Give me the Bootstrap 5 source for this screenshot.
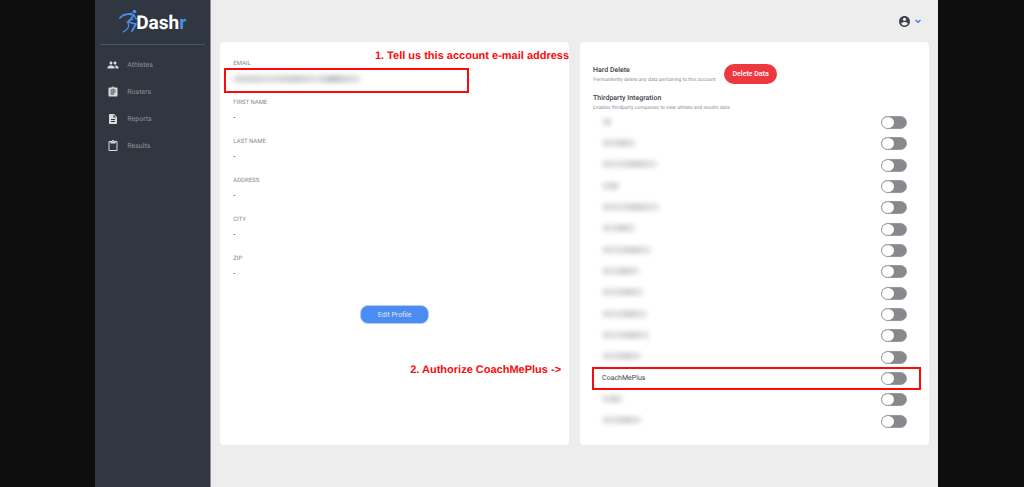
<!DOCTYPE html>
<html lang="en">
<head>
<meta charset="utf-8">
<meta name="viewport" content="width=device-width, initial-scale=1">
<title>Dashr – Profile</title>
<link href="https://cdn.jsdelivr.net/npm/bootstrap@5.3.0/dist/css/bootstrap.min.css" rel="stylesheet">
<style>
  body { background: #0e0e0e; font-family: Roboto, "Liberation Sans", sans-serif; font-size: 7px; line-height: 10px; color: #3c434c; text-rendering: geometricPrecision; }
  .app-shell { display: grid; grid-template-columns: 116px minmax(0, 1fr); margin-left: 9.3%; margin-right: 8.4%; background: #ededed; }
  .side { background: #303740; border-right: 1px solid #8d9095; }
  .brand { height: 45px; margin: 0 5px; padding: 9px 0 0 19px; border-bottom: 1px solid #4b5862; color: #fff; font-size: 19px; line-height: 28px; font-weight: 700; }
  .brand:hover { color: #fff; }
  .brand svg { width: 22px; height: 26px; margin-right: -5px; }
  .brand em { font-style: normal; color: #4a8df0; }
  .menu { padding: 6px 0 0 12px; }
  .menu a { height: 27px; gap: 8px; color: #8c9197; }
  .menu svg { width: 12px; height: 12px; fill: #d8dadb; }
  .topbar { height: 42px; padding-right: 16px; }
  .account { border: 0; background: none; }
  .panels { display: grid; grid-template-columns: repeat(2, minmax(0, 1fr)); padding: 0 9px 42px; gap: 11px; }
  .panel { border: 0; border-radius: 4px; background: #fff; position: relative; min-height: 403px; }
  .panel-profile { padding: 17px 4px 0; }
  .field { height: 39px; padding: 0; margin: 0; }
  .field dt { padding-left: 9px; font-size: 6px; line-height: 9px; font-weight: 400; color: #858a91; }
  .field dd { height: 25px; width: 245px; max-width: 100%; margin: 0; padding: 3px 7px; border: 2px solid transparent; font-size: 8px; line-height: 12px; }
  .field dd.marked { border-color: #fb0a0c; padding-top: 5px; }
  .edit-btn { width: 69px; height: 19px; padding: 0; border: 1px solid #b3cdf3; border-radius: 8px; background: #4a8cf2; color: #e6e7e8; font-size: 7px; line-height: 10px; }
  .panel-data { padding: 22px 9px 13px 13px; }
  .block-title { margin: 0; font-size: 7px; line-height: 11px; font-weight: 500; }
  .second-title { margin-top: 9px; }
  .hint { margin: 0; font-size: 5px; line-height: 8px; color: #8d9096; }
  .hard-delete { width: 131px; flex: none; }
  .delete-btn { width: 53px; height: 20px; padding: 0; border: 0; border-radius: 10px; background: #ee3840; color: #fff; font-size: 7px; font-weight: 500; }
  .partner { flex: 1 1 0; padding: 0 13px 0 9px; }
  .partner label { padding-bottom: 2px; }
  .partner.marked { outline: 2px solid #fb0a0c; outline-offset: -1px; }
  .partner .form-check-input { width: 26px; height: 13px; margin: 0; border: 1px solid #999a9d; border-radius: 7px; background: #88898c; display: flex; align-items: center; }
  .partner .form-check-input::before { content: ""; width: 12px; height: 11px; border-radius: 50%; background: #fff; }
  .partner .form-check-input:checked { background: #4a8cf2; justify-content: flex-end; }
  .smudge { display: block; height: 8px; border-radius: 4px; filter: blur(2px); background: linear-gradient(90deg, #dcdcdf, #e6e3e4 30%, #d2d4d7 62%, #eeebec); }
  .smudge-mail { width: 128px; background: linear-gradient(90deg, #dededf, #d4d6d9 15%, #e1e0e1 28%, #cdd0d3 50%, #e6e4e5 65%, #c3c8cc 78%, #ece9ea); }
  .callout-note { position: absolute; z-index: 2; white-space: nowrap; color: #fb0a0c; font: 700 11px/14px "Liberation Sans", Arial, sans-serif; margin: 0; }
  .note-mail { top: 7px; right: 0; }
  .note-auth { top: 321px; right: 8px; }
</style>
<script src="https://cdn.jsdelivr.net/npm/bootstrap@5.3.0/dist/js/bootstrap.bundle.min.js"></script>
</head>
<body>
<div class="app-shell min-vh-100">
  <aside class="side">
    <a class="brand d-flex align-items-start text-decoration-none" href="#" aria-label="Dashr">
      <svg viewBox="0 0 22 26" fill="none" stroke="#4a8df0" stroke-linecap="round" stroke-linejoin="round" aria-hidden="true">
        <circle cx="15.500" cy="2.500" r="1.800" fill="#4a8df0" stroke="none"/>
        <path d="M1 9C4 5 8 4 15 6L9 13L17 15L13 22" stroke-width="1.800"/>
        <path d="M15 6L17 10L21 8M9 14C11 18 8 21 4 23M8 13L14 10M6 6L13 4" stroke-width="1.300"/>
      </svg>
      <span>Dash<em>r</em></span>
    </a>
    <nav class="menu nav flex-column">
      <a class="d-flex align-items-center text-decoration-none" href="#"><svg viewBox="0 0 24 24"><path d="M16 11c1.660 0 2.990-1.340 2.990-3S17.660 5 16 5c-1.660 0-3 1.340-3 3s1.340 3 3 3zm-8 0c1.660 0 2.990-1.340 2.990-3S9.660 5 8 5C6.340 5 5 6.340 5 8s1.340 3 3 3zm0 2c-2.330 0-7 1.170-7 3.500V19h14v-2.500c0-2.330-4.670-3.500-7-3.500zm8 0c-.29 0-.62.02-.97.05 1.160.84 1.970 1.970 1.970 3.450V19h6v-2.500c0-2.330-4.670-3.500-7-3.500z"/></svg>Athletes</a>
      <a class="d-flex align-items-center text-decoration-none" href="#"><svg viewBox="0 0 24 24"><path d="M19 3h-4.180C14.400 1.840 13.300 1 12 1c-1.300 0-2.400.84-2.820 2H5c-1.100 0-2 .9-2 2v14c0 1.100.9 2 2 2h14c1.100 0 2-.9 2-2V5c0-1.100-.9-2-2-2zm-7 0c.55 0 1 .45 1 1s-.45 1-1 1-1-.45-1-1 .45-1 1-1zm2 14H7v-2h7v2zm3-4H7v-2h10v2zm0-4H7V7h10v2z"/></svg>Rosters</a>
      <a class="d-flex align-items-center text-decoration-none" href="#"><svg viewBox="0 0 24 24"><path d="M14 2H6c-1.100 0-2 .9-2 2v16c0 1.100.9 2 2 2h12c1.100 0 2-.9 2-2V8l-6-6zm2 16H8v-2h8v2zm0-4H8v-2h8v2zm-3-5V3.500L18.500 9H13z"/></svg>Reports</a>
      <a class="d-flex align-items-center text-decoration-none" href="#"><svg viewBox="0 0 24 24"><path d="M19 2h-4.180C14.400.84 13.300 0 12 0c-1.300 0-2.400.84-2.820 2H5c-1.100 0-2 .9-2 2v16c0 1.100.9 2 2 2h14c1.100 0 2-.9 2-2V4c0-1.100-.9-2-2-2zm-7 0c.55 0 1 .45 1 1s-.45 1-1 1-1-.45-1-1 .45-1 1-1zm7 18H5V4h2v3h10V4h2v16z"/></svg>Results</a>
    </nav>
  </aside>

  <main>
    <header class="topbar d-flex justify-content-end align-items-center">
      <button class="account d-flex align-items-center p-0" type="button" aria-label="Account">
        <svg width="11" height="11" viewBox="2 2 20 20" fill="#3b434d"><path d="M12 2C6.480 2 2 6.480 2 12s4.480 10 10 10 10-4.480 10-10S17.520 2 12 2zm0 3c1.660 0 3 1.340 3 3s-1.340 3-3 3-3-1.340-3-3 1.340-3 3-3zm0 14.200c-2.500 0-4.710-1.280-6-3.220.03-1.990 4-3.080 6-3.080 1.990 0 5.970 1.090 6 3.080-1.290 1.940-3.500 3.220-6 3.220z"/></svg>
        <svg class="ms-1" width="8" height="8" viewBox="0 0 8 8" fill="none" stroke="#3d82e8" stroke-width="1.400"><path d="M1.500 3L4 5.200L6.500 3"/></svg>
      </button>
    </header>

    <div class="panels">
      <section class="panel panel-profile">
        <p class="callout-note note-mail">1. Tell us this account e-mail address</p>
        <dl class="m-0">
          <div class="field"><dt>EMAIL</dt><dd class="marked"><span class="smudge smudge-mail"></span></dd></div>
          <div class="field"><dt>FIRST NAME</dt><dd>-</dd></div>
          <div class="field"><dt>LAST NAME</dt><dd>-</dd></div>
          <div class="field"><dt>ADDRESS</dt><dd>-</dd></div>
          <div class="field"><dt>CITY</dt><dd>-</dd></div>
          <div class="field"><dt>ZIP</dt><dd>-</dd></div>
        </dl>
        <div class="text-center pt-2"><button class="btn edit-btn mt-1" type="button">Edit Profile</button></div>
        <p class="callout-note note-auth">2. Authorize CoachMePlus -&gt;</p>
      </section>

      <section class="panel panel-data d-flex flex-column">
        <div class="d-flex align-items-center">
          <div class="hard-delete"><h2 class="block-title">Hard Delete</h2><p class="hint">Permantently delete any data pertaining to this account</p></div>
          <button class="btn delete-btn" type="button">Delete Data</button>
        </div>
        <h2 class="block-title second-title">Thirdparty Integration</h2>
        <p class="hint">Enables thirdparty companies to view athlete and results data</p>
        <div class="d-flex flex-column flex-fill" id="partners"></div>
      </section>
    </div>
  </main>
</div>
<script>
  // A number is the width of a concealed partner name.
  const partners = [10, 34, 56, 18, 58, 34, 50, 38, 42, 46, 48, 40, 'CoachMePlus', 21, 40];
  document.getElementById('partners').innerHTML = partners.map((p, i) => {
    const named = typeof p === 'string';
    const label = named
      ? `<label for="partner${i}">${p}</label>`
      : `<label for="partner${i}" aria-label="Partner ${i + 1}"><span class="smudge" style="width:${p}px"></span></label>`;
    return `<div class="partner d-flex align-items-center justify-content-between${named ? ' marked' : ''}">${label}<input class="form-check-input" type="checkbox" role="switch" id="partner${i}"></div>`;
  }).join('');
</script>
</body>
</html>
